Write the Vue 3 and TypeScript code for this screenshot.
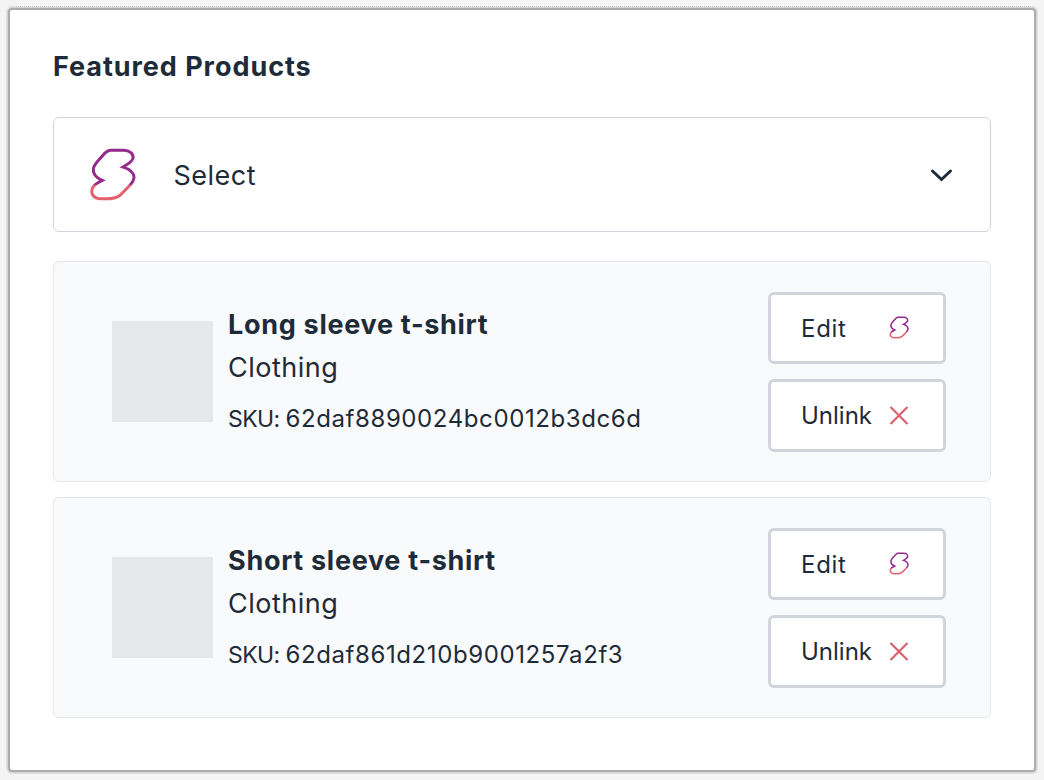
<script setup lang="ts">
interface Product {
  name: string;
  category: string;
  sku: string;
}

const products: Product[] = [
  { name: "Long sleeve t-shirt", category: "Clothing", sku: "62daf8890024bc0012b3dc6d" },
  { name: "Short sleeve t-shirt", category: "Clothing", sku: "62daf861d210b9001257a2f3" },
];

const logoPath =
  "M150 31 H190 C208 31 220 42 218 55 C217 64 205 72 188 82 C208 88 220 98 221 113 C221 122 215 130 208 138 L178 168 C168 176 155 178 135 178 H120 C102 178 90 165 94 150 C96 141 108 130 125 122 C108 115 97 104 98 88 C99 78 106 70 113 62 L133 40 C139 34 144 31 150 31 Z";
</script>

<template>
  <div class="page">
    <section class="card">
      <h2 class="title">Featured Products</h2>

      <div class="select">
        <svg class="logo" viewBox="85 22 142 165" fill="none" aria-hidden="true">
          <defs>
            <linearGradient id="brand" x1="0" y1="0" x2="0" y2="1">
              <stop offset="0.7" stop-color="#932a8c" />
              <stop offset="0.73" stop-color="#e5606f" />
            </linearGradient>
          </defs>
          <path :d="logoPath" stroke="url(#brand)" stroke-width="9" />
        </svg>
        <span class="select-label">Select</span>
        <svg class="chevron" viewBox="0 0 24 14" fill="none" aria-hidden="true">
          <path d="M2.5 3 L11.5 11.5 L20.5 3" stroke="#1e2b38" stroke-width="3" stroke-linecap="round" />
        </svg>
      </div>

      <ul class="list">
        <li v-for="p in products" :key="p.sku" class="row">
          <div class="thumb"></div>
          <div class="info">
            <div class="name">{{ p.name }}</div>
            <div class="category">{{ p.category }}</div>
            <div class="sku"><span class="sku-label">SKU: </span>{{ p.sku }}</div>
          </div>
          <div class="actions">
            <button class="btn" type="button">
              <span class="btn-edit">Edit</span>
              <svg class="btn-icon" viewBox="85 22 142 165" fill="none" aria-hidden="true">
                <path :d="logoPath" stroke="url(#brand)" stroke-width="11" />
              </svg>
            </button>
            <button class="btn" type="button">
              <span>Unlink</span>
              <svg class="btn-icon" viewBox="0 0 20 20" fill="none" aria-hidden="true">
                <path d="M1.5 1.5 L18.5 18.5 M18.5 1.5 L1.5 18.5" stroke="#d9606f" stroke-width="2.2" />
              </svg>
            </button>
          </div>
        </li>
      </ul>
    </section>
  </div>
</template>

<style>
html,
body {
  margin: 0;
  background: #f4f4f4;
}
</style>

<style scoped>
.page {
  width: 1044px;
  height: 780px;
  box-sizing: border-box;
  padding: 10px;
  background: #f4f4f4;
  font-family: "Inter", "Noto Sans", sans-serif;
  color: #1e2b38;
}

.card {
  box-sizing: border-box;
  width: 1024px;
  height: 760px;
  padding: 40px 43px 0;
  background: #fff;
  border-radius: 2px;
  box-shadow: 0 0 0 2px #acacac, 0 0 0 3px #d6d6d6;
  outline: 1px dotted #c8c8c8;
  outline-offset: 3px;
}

.title {
  margin: 0;
  font-size: 27px;
  line-height: 34px;
  font-weight: 700;
  letter-spacing: 0.95px;
}

.select {
  display: flex;
  align-items: center;
  box-sizing: border-box;
  height: 115px;
  margin-top: 33px;
  padding: 0 36px 0 35px;
  border: 1px solid #d1d5db;
  border-radius: 6px;
  background: #fff;
}

.logo {
  width: 47px;
  height: 55px;
  flex: none;
}

.select-label {
  margin-left: 38px;
  font-size: 27px;
  letter-spacing: 0.5px;
  flex: 1;
  transform: translate(-0.5px, 1px);
}

.chevron {
  width: 24px;
  height: 14px;
  flex: none;
}

.list {
  list-style: none;
  margin: 29px 0 0;
  padding: 0;
  display: flex;
  flex-direction: column;
  gap: 15px;
}

.row {
  display: flex;
  align-items: center;
  box-sizing: border-box;
  height: 221px;
  padding: 0 44px 0 58px;
  background: #f9fafb;
  border: 1px solid #e5e7eb;
  border-radius: 6px;
}

.thumb {
  width: 101px;
  height: 101px;
  flex: none;
  background: #e5e7eb;
}

.info {
  flex: 1;
  margin-left: 15px;
  margin-bottom: 2px;
}

.name {
  font-size: 27px;
  line-height: 36px;
  font-weight: 700;
  letter-spacing: 0.7px;
}

.category {
  font-size: 27px;
  line-height: 38px;
  margin-top: 6px;
  letter-spacing: 0.5px;
}

.sku {
  font-size: 24px;
  line-height: 30px;
  margin-top: 17px;
  letter-spacing: 0.6px;
}

.sku-label {
  font-size: 23px;
  letter-spacing: -0.6px;
}

.actions {
  display: flex;
  flex-direction: column;
  gap: 15px;
  flex: none;
}

.btn {
  display: flex;
  align-items: center;
  justify-content: space-between;
  box-sizing: border-box;
  width: 178px;
  height: 72.5px;
  padding: 0 34px 0 30px;
  background: #fff;
  border: 3px solid #d1d5db;
  border-radius: 6px;
  font: inherit;
  font-size: 24px;
  color: inherit;
}

.btn-edit {
  letter-spacing: 0.7px;
  transform: translateY(1px);
}

.btn-icon {
  width: 20px;
  height: 23px;
  flex: none;
}
</style>
